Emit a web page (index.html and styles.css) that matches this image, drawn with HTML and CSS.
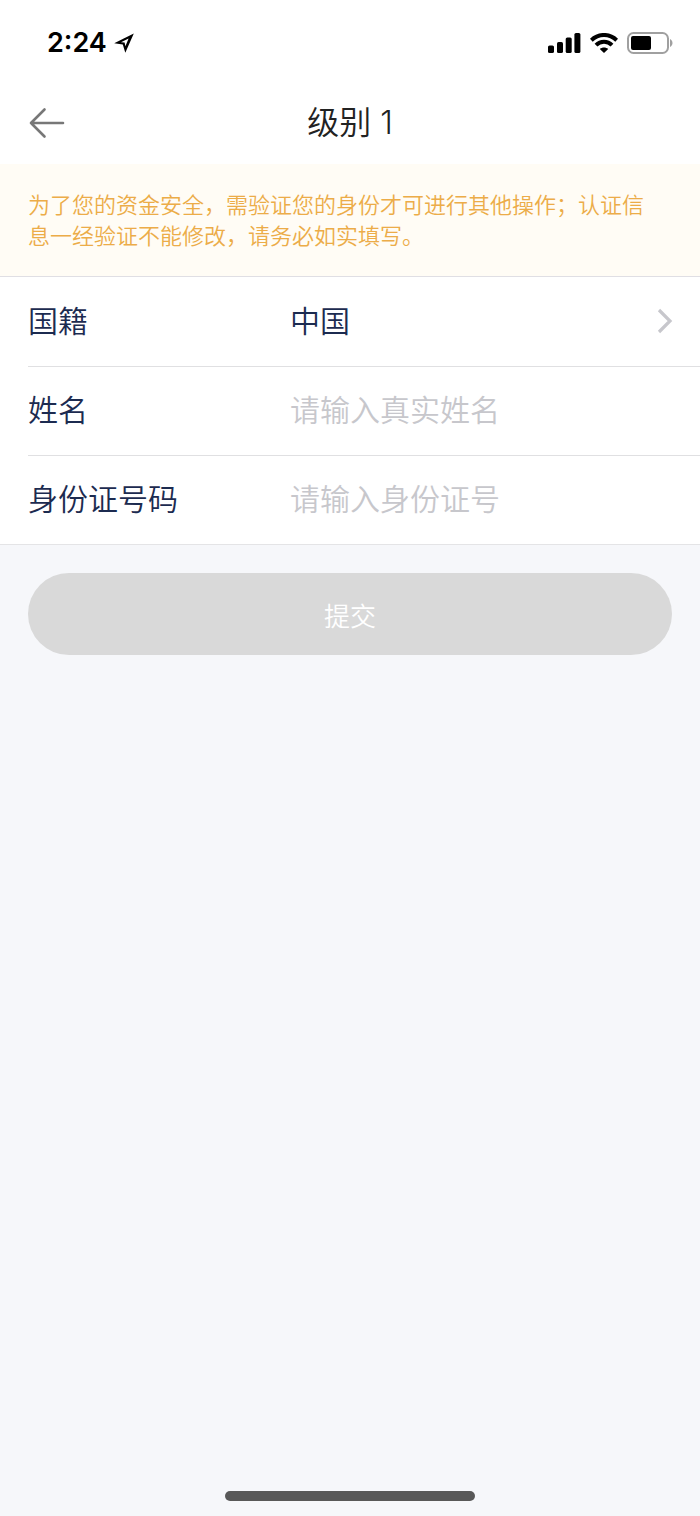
FILE: index.html
```html
<!DOCTYPE html>
<html lang="zh-CN">
<head>
  <meta charset="utf-8">
  <meta name="viewport" content="width=device-width, initial-scale=1">
  <title>级别 1</title>
  <link rel="stylesheet" href="styles.css">
</head>
<body class="screen">
  <div class="status-bar">
    <div class="status-left">
      <time class="clock">2:24</time>
      <svg class="location" width="20" height="20" viewBox="0 0 20 20" aria-hidden="true">
        <path fill="#000" fill-rule="evenodd" d="M19.8.5 11.3 19.8 8.8 11.4.2 10.2ZM14.6 5.4 7 9.200 10.600 9.600 11.400 13.200Z"/>
      </svg>
    </div>
    <div class="status-right">
      <svg width="33" height="20" viewBox="0 0 33 20" aria-hidden="true">
        <rect x="0" y="12.5" width="6" height="7.5" rx="1.6"/>
        <rect x="9" y="9" width="6" height="11" rx="1.6"/>
        <rect x="17.7" y="4.5" width="6" height="15.5" rx="1.6"/>
        <rect x="26.4" y="0" width="6" height="20" rx="1.6"/>
      </svg>
      <svg width="28" height="20" viewBox="0 0 28 20" aria-hidden="true">
        <path fill="none" stroke="#000" stroke-width="4" d="M1.3 7.2C8.5.2 19.5.2 26.7 7.2M6 12.2C10.5 7.7 17.5 7.7 22 12.2"/>
        <path d="M14 20 9.8 15.9C12.2 13.9 15.8 13.9 18.2 15.9Z"/>
      </svg>
      <svg width="46" height="22" viewBox="0 0 46 22" aria-hidden="true">
        <rect x="1" y="1" width="40" height="20" rx="5.5" fill="none" stroke="#a0a0a0" stroke-width="2"/>
        <rect x="4" y="4" width="20" height="14" rx="2"/>
        <path fill="#a0a0a0" d="M43 7C46.3 8.5 46.3 13.5 43 15Z"/>
      </svg>
    </div>
  </div>

  <header class="nav">
    <button class="back" type="button" aria-label="返回">
      <svg width="36" height="32" viewBox="0 0 36 32" aria-hidden="true">
        <path fill="none" stroke="#777" stroke-width="2.6" stroke-linecap="round" stroke-linejoin="round" d="M15.5 2.5 2 16 15.5 29.5M2 16H34"/>
      </svg>
    </button>
    <h1 class="title">级别 1</h1>
  </header>

  <main>
    <p class="notice">为了您的资金安全，需验证您的身份才可进行其他操作；认证信息一经验证不能修改，请务必如实填写。</p>
    <form>
      <div class="fields">
        <div class="row">
          <label class="label" for="nation">国籍</label>
          <select class="control" id="nation"><option>中国</option></select>
          <svg class="chevron" width="16" height="26" viewBox="0 0 16 26" aria-hidden="true">
            <path fill="none" stroke="#c7c7cc" stroke-width="3.2" d="M2 2 13 13 2 24"/>
          </svg>
        </div>
        <div class="row">
          <label class="label" for="name">姓名</label>
          <input class="control" id="name" type="text" placeholder="请输入真实姓名">
        </div>
        <div class="row">
          <label class="label" for="idno">身份证号码</label>
          <input class="control" id="idno" type="text" placeholder="请输入身份证号">
        </div>
      </div>
      <div class="actions">
        <button class="submit" type="submit" disabled>提交</button>
      </div>
    </form>
  </main>

  <div class="home"><div class="home-bar"></div></div>
</body>
</html>
```
FILE: styles.css
```css
* {
  box-sizing: border-box;
}

.screen {
  margin: 0;
  min-height: 100vh;
  display: flex;
  flex-direction: column;
  background: #f6f7fa;
  color: #1c2b50;
  font-family: Inter, "Noto Sans CJK SC DemiLight", "Noto Sans CJK SC", sans-serif;
  font-weight: 350;
}

.status-bar {
  display: flex;
  justify-content: space-between;
  align-items: center;
  height: 84px;
  padding: 2px 27px 0 47px;
  background: #fff;
  color: #000;
}

.status-left {
  display: flex;
  align-items: center;
  gap: 7px;
}

.status-right {
  display: flex;
  align-items: center;
  gap: 9px;
}

.clock {
  font-size: 27px;
  font-weight: 600;
  line-height: 32px;
}

.nav {
  display: grid;
  grid-template-columns: 60px 1fr 60px;
  align-items: center;
  height: 80px;
  padding: 0 29px 2px;
  background: #fff;
}

.back {
  display: flex;
  padding: 0;
  border: 0;
  background: none;
}

.title {
  grid-column: 2;
  margin: 0;
  color: #222;
  font-size: 32px;
  font-weight: inherit;
  line-height: 40px;
  text-align: center;
}

.notice {
  margin: 0;
  padding: 26px 40px 24px 28px;
  background: #fffcf5;
  color: #ecac48;
  font-size: 22px;
  line-height: 31px;
}

.fields {
  padding-left: 28px;
  border-top: 1px solid #e0dfe4;
  border-bottom: 1px solid #e4e4e6;
  background: #fff;
}

.row {
  display: flex;
  align-items: center;
  height: 89px;
  padding: 0 27px 2px 0;
}

.row + .row {
  border-top: 1px solid #e0e0e2;
}

.label {
  flex: 0 0 262px;
  font-size: 30px;
  line-height: 44px;
}

.control {
  flex: 1;
  min-width: 0;
  height: 44px;
  padding: 0;
  border: 0;
  outline: 0;
  appearance: none;
  background: none;
  color: inherit;
  font: inherit;
  font-size: 30px;
  line-height: 44px;
}

.control::placeholder {
  color: #c7c7cc;
  opacity: 1;
}

.actions {
  padding: 28px;
}

.submit {
  display: block;
  width: 100%;
  height: 82px;
  border: 0;
  border-radius: 41px;
  background: #d9d9d9;
  color: #fff;
  font: inherit;
  font-size: 26px;
}

.home {
  display: flex;
  justify-content: center;
  margin-top: auto;
  padding-bottom: 15px;
}

.home-bar {
  width: 250px;
  height: 10px;
  border-radius: 5px;
  background: #585858;
}
```
